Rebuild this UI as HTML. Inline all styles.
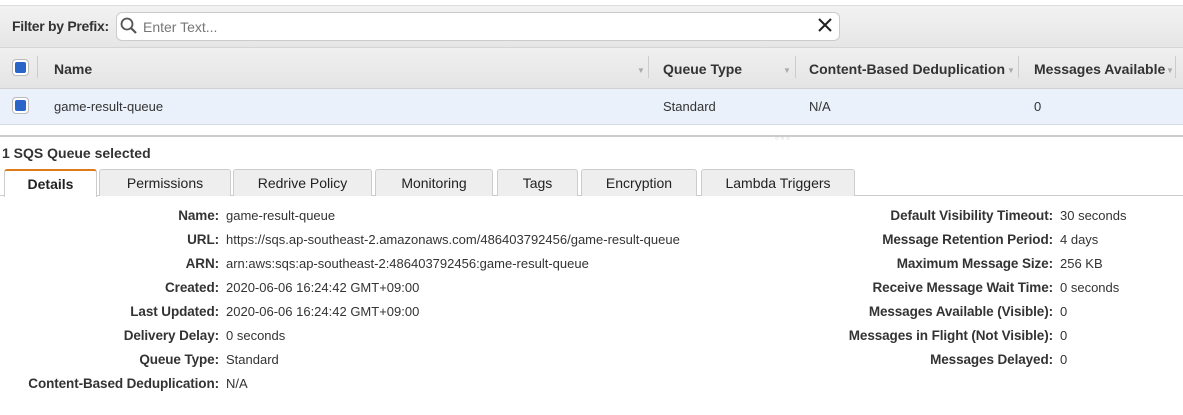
<!DOCTYPE html>
<html><head><style>
*{margin:0;padding:0;box-sizing:border-box}
body{width:1183px;height:415px;background:#fff;font-family:"Liberation Sans",sans-serif;color:#222;position:relative;overflow:hidden}
.abs{position:absolute}
.cb{position:absolute;width:17px;height:17px;border:1px solid #bbb;border-radius:4px;background:#fff}
.cb i{position:absolute;left:2px;top:2px;width:11px;height:11px;background:#2a66c8;border-radius:2px}
.hd{position:absolute;top:61px;font-size:14px;font-weight:bold;color:#333}
.sep{position:absolute;top:56px;width:1px;height:22px;background:#ccc}
.ar{position:absolute;top:66px;font-size:8px;color:#aaa}
.tab{position:absolute;top:169px;height:27px;border:1px solid #ccc;border-bottom:none;background:#eee;font-size:14px;text-align:center;line-height:27px;color:#222;border-radius:3px 3px 0 0}
.l{position:absolute;font-size:13.5px;font-weight:bold;text-align:right;color:#333;letter-spacing:-0.1px}
.v{position:absolute;font-size:13px;color:#333}
</style></head><body>
<div class="abs" style="left:0;top:5px;width:1183px;height:42px;background:linear-gradient(#f2f2f2,#e6e6e6);border-top:1px solid #ddd"></div>
<div class="abs" style="left:12px;top:18px;font-size:14px;font-weight:bold;color:#333;letter-spacing:-0.3px">Filter by Prefix:</div>
<div class="abs" style="left:116px;top:12px;width:724px;height:29px;background:#fff;border:1px solid #ccc;border-radius:6px"></div>
<svg class="abs" style="left:119px;top:16px" width="20" height="20"><circle cx="8" cy="8" r="5.5" fill="none" stroke="#555" stroke-width="1.8"/><line x1="12" y1="12" x2="17" y2="17" stroke="#555" stroke-width="2.2"/></svg>
<div class="abs" style="left:143px;top:19px;font-size:14px;color:#777">Enter Text...</div>
<svg class="abs" style="left:818px;top:18px" width="14" height="14"><path d="M1 1L13 13M13 1L1 13" stroke="#222" stroke-width="2"/></svg>
<div class="abs" style="left:0;top:47px;width:1183px;height:42px;background:linear-gradient(#f0f0f0,#e4e4e4);border-top:1px solid #d5d5d5;border-bottom:1px solid #d0d0d0"></div>
<div class="cb" style="left:12px;top:59px"><i></i></div>
<div class="sep" style="left:37px"></div>
<div class="hd" style="left:54px">Name</div>
<div class="ar" style="left:637px">▼</div>
<div class="sep" style="left:648px"></div>
<div class="hd" style="left:663px">Queue Type</div>
<div class="ar" style="left:783px">▼</div>
<div class="sep" style="left:795px"></div>
<div class="hd" style="left:809px">Content-Based Deduplication</div>
<div class="ar" style="left:1007px">▼</div>
<div class="sep" style="left:1018px"></div>
<div class="hd" style="left:1034px">Messages Available</div>
<div class="ar" style="left:1166px">▼</div>
<div class="sep" style="left:1175px"></div>
<div class="abs" style="left:0;top:89px;width:1183px;height:36px;background:#eaf1fb;border-bottom:1px solid #d5dbe3"></div>
<div class="cb" style="left:12px;top:97px"><i></i></div>
<div class="v" style="left:54px;top:99px;font-size:13px">game-result-queue</div>
<div class="v" style="left:663px;top:99px;font-size:13px">Standard</div>
<div class="v" style="left:809px;top:99px;font-size:13px">N/A</div>
<div class="v" style="left:1034px;top:99px;font-size:13px">0</div>
<div class="abs" style="left:0;top:135px;width:1183px;height:2px;background:#ccc"></div>
<div class="abs" style="left:775px;top:136px;font-size:6px;color:#bbb;letter-spacing:2px">○○○</div>
<div class="abs" style="left:2px;top:145px;font-size:14px;font-weight:bold;color:#333">1 SQS Queue selected</div>
<div class="abs" style="left:0;top:195px;width:1183px;height:1px;background:#ccc"></div>
<div class="tab" style="left:4px;width:93px;background:#fff;border-top:2px solid #e07b1a;height:28px;font-weight:bold">Details</div>
<div class="tab" style="left:99px;width:132px">Permissions</div>
<div class="tab" style="left:233px;width:139px">Redrive Policy</div>
<div class="tab" style="left:375px;width:118px">Monitoring</div>
<div class="tab" style="left:497px;width:81px">Tags</div>
<div class="tab" style="left:581px;width:116px">Encryption</div>
<div class="tab" style="left:701px;width:154px">Lambda Triggers</div>
<div class="l" style="right:964px;top:204px;line-height:24px">Name:<br>URL:<br>ARN:<br>Created:<br>Last Updated:<br>Delivery Delay:<br>Queue Type:<br>Content-Based Deduplication:</div>
<div class="v" style="left:226px;top:204px;line-height:24px">game-result-queue<br>https://sqs.ap-southeast-2.amazonaws.com/486403792456/game-result-queue<br>arn:aws:sqs:ap-southeast-2:486403792456:game-result-queue<br>2020-06-06 16:24:42 GMT+09:00<br>2020-06-06 16:24:42 GMT+09:00<br>0 seconds<br>Standard<br>N/A</div>
<div class="l" style="right:130px;top:204px;line-height:24px">Default Visibility Timeout:<br>Message Retention Period:<br>Maximum Message Size:<br>Receive Message Wait Time:<br>Messages Available (Visible):<br>Messages in Flight (Not Visible):<br>Messages Delayed:</div>
<div class="v" style="left:1060px;top:204px;line-height:24px">30 seconds<br>4 days<br>256 KB<br>0 seconds<br>0<br>0<br>0</div>
</body></html>
